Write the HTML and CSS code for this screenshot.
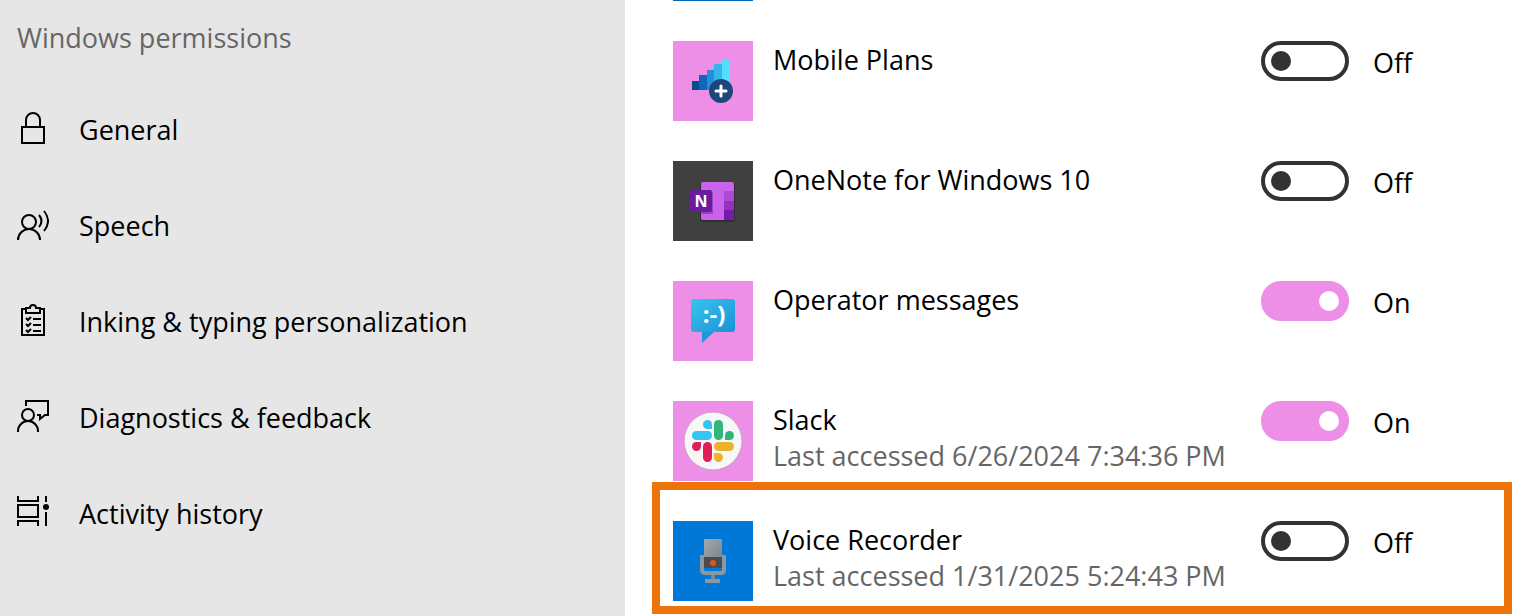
FILE: index.html
```html
<!DOCTYPE html>
<html lang="en">
<head>
    <meta charset="UTF-8">
    <meta name="viewport" content="width=device-width, initial-scale=1.0">
    <title>Microphone privacy settings</title>
    <link rel="stylesheet" href="styles.css">
</head>
<body>

    <nav class="sidebar">
        <h2 class="sidebar-title">Windows permissions</h2>
        <a class="nav-link" href="#general">
            <svg class="nav-icon" viewBox="0 0 32 32"><rect x="5" y="15" width="22" height="16"/><path d="M9 15V8a7 7 0 0 1 14 0v7"/></svg>
            <span class="nav-text">General</span>
        </a>
        <a class="nav-link" href="#speech">
            <svg class="nav-icon" viewBox="0 0 32 32"><circle cx="12" cy="14" r="7"/><path d="M1 32a11 11 0 0 1 22 0M22 7q5 6 0 12M27 3q8 10 0 20"/></svg>
            <span class="nav-text">Speech</span>
        </a>
        <a class="nav-link" href="#inking">
            <svg class="nav-icon" viewBox="0 0 32 32"><path d="M9 5H5v26h22V5h-4M9 4h4c0-4 6-4 6 0h4v5H9zM16 15h8M16 21h8M16 27h8M9 14l2 2 3-3M9 20l2 2 3-3M9 26l2 2 3-3"/></svg>
            <span class="nav-text">Inking &amp; typing personalization</span>
        </a>
        <a class="nav-link" href="#diagnostics">
            <svg class="nav-icon" viewBox="0 0 32 32"><circle cx="11" cy="15" r="6"/><path d="M1 32v-1a10 10 0 0 1 20 0v1M9 6V1h22v14h-3l-5 4v-4h-3"/></svg>
            <span class="nav-text">Diagnostics &amp; feedback</span>
        </a>
        <a class="nav-link" href="#activity">
            <svg class="nav-icon" viewBox="0 0 32 32"><path d="M1 0v5h20V0M1 9h20v12H1zM1 30v-5h20v5M29 0v6M29 16v14"/><circle class="dot" cx="29" cy="11" r="3"/></svg>
            <span class="nav-text">Activity history</span>
        </a>
    </nav>

    <main class="apps">
        <div class="app-edge"></div>

        <div class="app">
            <svg class="tile pink" viewBox="0 0 80 80">
                <path fill="#0d4a8b" d="M19 40h8v9h-8z"/>
                <path fill="#0f66bd" d="M26 34h8v15h-8z"/>
                <path fill="#2390d8" d="M34 29h7v20h-7z"/>
                <path fill="#37b4e8" d="M41 23h8v26h-8z"/>
                <path fill="#50e0fb" d="M49 18h8v31h-8z"/>
                <circle cx="48" cy="50" r="12" fill="#1d477c"/>
                <path d="M48 45v10M43 50h10" stroke="#fff" stroke-width="3" stroke-linecap="round"/>
            </svg>
            <div class="info">
                <label class="name" for="mobile">Mobile Plans</label>
            </div>
            <input class="switch" type="checkbox" id="mobile">
            <span class="state">Off</span>
        </div>

        <div class="app">
            <svg class="tile dark" viewBox="0 0 80 80">
                <rect x="27" y="22" width="35" height="39" rx="2" fill="#303030"/>
                <rect x="28" y="21" width="33" height="38" rx="2" fill="#c964ea"/>
                <path fill="#ae4bd5" d="M51 30h10v10H51z"/>
                <path fill="#9332bf" d="M51 40h10v9H51z"/>
                <path fill="#7719aa" d="M51 49h10v8a2 2 0 0 1-2 2h-8z"/>
                <path fill="#9a45c0" d="M28 31h12v22H28z"/>
                <rect x="17" y="29" width="22" height="22" rx="2" fill="#6a1b9e"/>
                <text class="onenote" x="28" y="46">N</text>
            </svg>
            <div class="info">
                <label class="name" for="onenote">OneNote for Windows 10</label>
            </div>
            <input class="switch" type="checkbox" id="onenote">
            <span class="state">Off</span>
        </div>

        <div class="app">
            <svg class="tile pink" viewBox="0 0 80 80">
                <defs>
                    <linearGradient id="bubble" x1="0" y1="0" x2="1" y2="1">
                        <stop offset="0" stop-color="#38c4ee"/>
                        <stop offset="1" stop-color="#1c91d8"/>
                    </linearGradient>
                </defs>
                <path fill="#1f98d6" d="M29 50v12l13-12z"/>
                <rect x="18" y="18" width="44" height="33" rx="3" fill="url(#bubble)"/>
                <text class="smile" x="41" y="42">:-)</text>
            </svg>
            <div class="info">
                <label class="name" for="operator">Operator messages</label>
            </div>
            <input class="switch" type="checkbox" id="operator" checked>
            <span class="state">On</span>
        </div>

        <div class="app">
            <svg class="tile pink" viewBox="0 0 80 80">
                <defs>
                    <g id="petal">
                        <rect x="19" y="30" width="20" height="9" rx="4.500"/>
                        <path d="M39 28h-4.500a4.500 4.500 0 1 1 4.500-4.500z"/>
                    </g>
                </defs>
                <circle cx="40" cy="40" r="29" fill="#f7f7f7" stroke="#c9a0c4"/>
                <use href="#petal" fill="#36c5f0"/>
                <use href="#petal" fill="#2eb67d" transform="rotate(90 40 40)"/>
                <use href="#petal" fill="#ecb22e" transform="rotate(180 40 40)"/>
                <use href="#petal" fill="#e01e5a" transform="rotate(270 40 40)"/>
            </svg>
            <div class="info">
                <label class="name" for="slack">Slack</label>
                <span class="accessed">Last accessed 6/26/2024 7:34:36 PM</span>
            </div>
            <input class="switch" type="checkbox" id="slack" checked>
            <span class="state">On</span>
        </div>

        <div class="app highlight">
            <svg class="tile blue" viewBox="0 0 80 80">
                <defs>
                    <linearGradient id="mic" x1="0" y1="0" x2="1" y2="1">
                        <stop offset="0" stop-color="#a4a9ad"/>
                        <stop offset="1" stop-color="#7d858c"/>
                    </linearGradient>
                </defs>
                <path d="M29 34v15q0 3 3 3h16q3 0 3-3V34" fill="none" stroke="#8d979f" stroke-width="4"/>
                <path fill="#7b8790" d="M38 54h4v4h-4z"/>
                <path fill="#8d979f" d="M32 58h15v4H32z"/>
                <rect x="31" y="18" width="18" height="19" rx="1" fill="url(#mic)"/>
                <path fill="#4b4c4e" d="M31 36h18v11H31z"/>
                <circle cx="40" cy="42" r="3" fill="#e8501c"/>
            </svg>
            <div class="info">
                <label class="name" for="recorder">Voice Recorder</label>
                <span class="accessed">Last accessed 1/31/2025 5:24:43 PM</span>
            </div>
            <input class="switch" type="checkbox" id="recorder">
            <span class="state">Off</span>
        </div>
    </main>

<script>
    document.querySelectorAll('.switch').forEach(function (box) {
        box.addEventListener('change', function () {
            box.nextElementSibling.innerText = box.checked ? 'On' : 'Off';
        });
    });
</script>

</body>
</html>
```
FILE: styles.css
```css
* {
    box-sizing: border-box;
}

body {
    margin: 0;
    min-height: 100vh;
    display: grid;
    grid-template-columns: 625fr 904fr;
    font-family: "Segoe UI", "Open Sans", sans-serif;
    font-size: 27px;
    line-height: 36px;
    color: #000;
    background-color: #fff;
}

.sidebar {
    background-color: #e6e6e6;
    padding: 20px 17px;
}

.sidebar-title {
    margin: 0 0 24px;
    font-size: 27px;
    font-weight: normal;
    color: #666;
}

.nav-link {
    display: flex;
    align-items: center;
    gap: 30px;
    height: 96px;
    color: #000;
    text-decoration: none;
}

.nav-text {
    padding-top: 4px;
}

.nav-icon {
    width: 32px;
    height: 32px;
    fill: none;
    stroke: #000;
    stroke-width: 2;
    flex-shrink: 0;
}

.dot {
    fill: #000;
    stroke: none;
}

.apps {
    display: flex;
    flex-direction: column;
    gap: 40px;
    padding: 0 38px 15px 48px;
}

/* bottom edge of the app scrolled out of view */
.app-edge {
    width: 80px;
    height: 1px;
    background-color: #0067b8;
}

.app {
    position: relative;
    display: grid;
    grid-template-columns: 100px 1fr 112px 118px;
    align-items: start;
}

.tile {
    width: 80px;
    height: 80px;
}

.pink {
    background-color: #ee8fe7;
}

.dark {
    background-color: #404040;
}

.blue {
    background-color: #0078d7;
}

.info {
    display: flex;
    flex-direction: column;
    align-items: flex-start;
    padding-top: 1px;
    white-space: nowrap;
}

.accessed {
    color: #666;
}

.onenote,
.smile {
    fill: #fff;
    font-weight: bold;
    text-anchor: middle;
}

.onenote {
    font-size: 16px;
}

.smile {
    font-size: 24px;
}

.switch {
    appearance: none;
    margin: 0;
    width: 88px;
    height: 40px;
    padding: 0 6px;
    border: 4px solid #333;
    border-radius: 20px;
    display: flex;
    align-items: center;
    cursor: pointer;
}

.switch::before {
    content: "";
    width: 20px;
    height: 20px;
    border-radius: 50%;
    background-color: #333;
}

.switch:checked {
    justify-content: flex-end;
    border-color: #ee8fe7;
    background-color: #ee8fe7;
}

.switch:checked::before {
    background-color: #fff;
}

.state {
    line-height: 44px;
}

/* orange frame drawn round the whole row */
.highlight::after {
    content: "";
    position: absolute;
    inset: -39px -21px -13px;
    border: 8px solid #ec740a;
    pointer-events: none;
}
```
